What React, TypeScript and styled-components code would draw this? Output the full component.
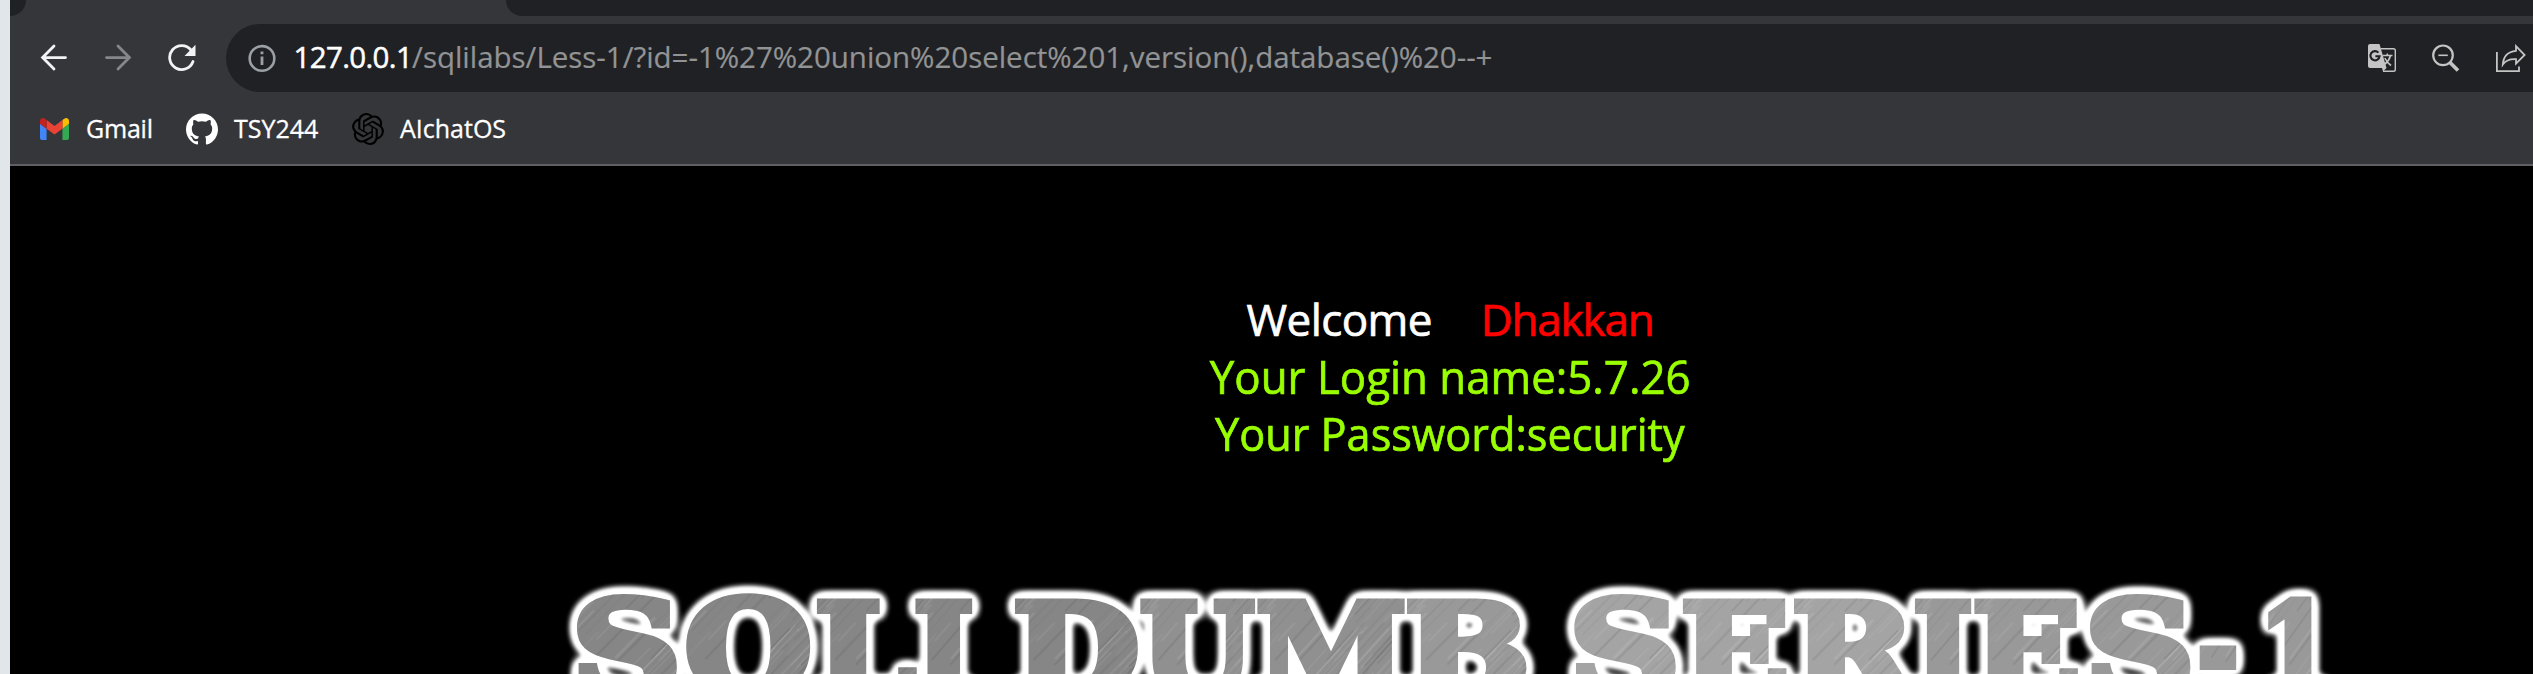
import React, { useLayoutEffect, useState } from 'react';
import styled, { createGlobalStyle } from 'styled-components';
import { SiGithub, SiOpenai } from 'react-icons/si';

const GlobalStyle = createGlobalStyle`
  * { box-sizing: border-box; }
  body { margin: 0; background: #000; overflow: hidden; }
`;

const Screen = styled.div`
  display: flex;
  width: 2533px;
  height: 674px;
  overflow: hidden;
  font-family: 'Open Sans', 'Noto Sans', sans-serif;
`;
const DesktopEdge = styled.div`
  flex: 0 0 10px;
  background: #e0e6ea;
`;
const Browser = styled.div`
  flex: 1;
  min-width: 0;
  display: flex;
  flex-direction: column;
  background: #35363a;
`;
const TabStrip = styled.div`
  display: flex;
  justify-content: space-between;
  height: 16px;
`;
const TabGap = styled.div<{ $side: 'left' | 'right' }>`
  width: ${p => (p.$side === 'left' ? '16px' : '2027px')};
  background: #202124;
  border-radius: ${p => (p.$side === 'left' ? '0 0 16px 0' : '0 0 0 16px')};
`;
const Toolbar = styled.div`
  display: flex;
  align-items: center;
  height: 68px;
  margin-top: 8px;
`;
const NavButton = styled.div<{ $dim?: boolean }>`
  width: 64px;
  height: 68px;
  display: flex;
  align-items: center;
  justify-content: center;
  color: ${p => (p.$dim ? '#86878a' : '#f1f3f4')};
  svg { display: block; }
`;
const NavGroup = styled.div`
  display: flex;
  padding-left: 12px;
  width: 216px;
`;
const AddressBar = styled.div`
  flex: 1;
  height: 68px;
  display: flex;
  align-items: center;
  justify-content: space-between;
  padding: 0 7px 0 22px;
  background: #202124;
  border-radius: 34px 0 0 34px;
`;
const UrlGroup = styled.div`
  display: flex;
  align-items: center;
  gap: 17.5px;
`;
const Url = styled.div`
  font-size: 29.5px;
  line-height: 66px;
  height: 68px;
  white-space: nowrap;
`;
const UrlPart = styled.span<{ $host?: boolean; $spacing: number }>`
  color: ${p => (p.$host ? '#fff' : '#929394')};
  letter-spacing: ${p => p.$spacing}px;
  -webkit-text-stroke: ${p => (p.$host ? 0.5 : 0.2)}px currentColor;
`;
const Actions = styled.div`
  display: flex;
  align-items: center;
  gap: 36px;
  color: #c4c4c4;
  svg { display: block; }
`;
const Bookmarks = styled.div`
  display: flex;
  align-items: center;
  height: 74px;
  margin-bottom: -2px;
  padding-left: 28px;
`;
const Bookmark = styled.div<{ $width: number }>`
  display: flex;
  align-items: center;
  height: 74px;
  width: ${p => p.$width}px;
  svg { display: block; }
`;
const BookmarkIcon = styled.div`
  width: 32px;
  margin: 0 16px 0 0;
  display: flex;
  justify-content: center;
`;
const BookmarkLabel = styled.span<{ $spacing: number }>`
  color: #fff;
  font-size: 25px;
  padding-bottom: 2px;
  letter-spacing: ${p => p.$spacing}px;
  -webkit-text-stroke: 0.3px currentColor;
`;
const Page = styled.div`
  flex: 1;
  min-height: 0;
  border-top: 2px solid #5f6064;
  background: #000;
  display: flex;
  flex-direction: column;
`;
const Greeting = styled.div`
  display: flex;
  flex-direction: column;
  align-items: center;
  width: 2880px;
  padding-top: 125px;
  align-self: flex-start;
`;
const WelcomeLine = styled.div`
  display: flex;
  gap: 49px;
  height: 57px;
  line-height: 57px;
  font-size: 44px;
`;
const Word = styled.span<{ $color: string; $spacing: number }>`
  color: ${p => p.$color};
  letter-spacing: ${p => p.$spacing}px;
  -webkit-text-stroke: 0.7px currentColor;
`;
const ResultLine = styled.div<{ $stretch: number }>`
  height: 57px;
  line-height: 57px;
  font-size: 46px;
  color: #99ff00;
  transform: scaleX(${p => p.$stretch});
  -webkit-text-stroke: 0.7px currentColor;
  white-space: nowrap;
`;
const Banner = styled.svg`
  display: block;
  flex: 0 0 134px;
  margin-top: 78px;
`;
const BANNER_FONT = "bold 126px 'DejaVu Serif', serif";
const WEIGHT = 8;
const BannerLetter = styled.text`
  font: ${BANNER_FONT};
  stroke-width: ${WEIGHT}px;
`;

/* Each letter of the banner: left and right edge of its ink, and its metal tone. */
const letters: [string, number, number, number][] = [
  ['S', 576.5, 677.5, 0], ['Q', 686, 811, 0], ['L', 816, 917, 0], ['I', 914.5, 973, 0],
  ['D', 1014, 1138, 0], ['U', 1140, 1256, 1], ['M', 1257, 1405, 1], ['B', 1406, 1527, 2],
  ['S', 1574, 1676.5, 3], ['E', 1682, 1787, 3], ['R', 1793, 1921, 3], ['I', 1914, 1972, 2],
  ['E', 1973.5, 2078.5, 2], ['S', 2089.5, 2191, 2], ['-', 2199, 2236.5, 2], ['1', 2268, 2327, 2],
];
const tones = ['#868686', '#909090', '#999', '#a4a4a4'];

const random = (seed: number) => {
  let s = seed;
  return () => {
    s = (s * 16807) % 2147483647;
    return s / 2147483647;
  };
};
const streaks = (() => {
  const r = random(77);
  return Array.from({ length: 620 }, () => ({
    x: r() * 400, y: r() * 400, len: 20 + r() * 90, w: 0.6 + r() * 1.6,
    light: r() > 0.5, o: 0.03 + r() * 0.1,
  }));
})();

const BannerText = () => {
  const [boxes, setBoxes] = useState<{ l: number; w: number }[]>([]);
  useLayoutEffect(() => {
    const ctx = document.createElement('canvas').getContext('2d')!;
    ctx.font = BANNER_FONT;
    setBoxes(letters.map(([c]) => {
      const m = ctx.measureText(c);
      return { l: -m.actualBoundingBoxLeft, w: m.actualBoundingBoxRight + m.actualBoundingBoxLeft };
    }));
  }, []);
  return (
    <Banner width="2523" height="134" viewBox="10 540 2523 134">
      <defs>
        {tones.map((tone, t) => (
          <pattern key={tone} id={`metal${t}`} patternUnits="userSpaceOnUse" width="400" height="400" patternTransform="rotate(-50)">
            <rect width="400" height="400" fill={tone} />
            {streaks.map((s, i) => (
              <rect key={i} x={s.x} y={s.y} width={s.len} height={s.w} fill={s.light ? '#fff' : '#222'} opacity={s.o} />
            ))}
          </pattern>
        ))}
        <filter id="halo" filterUnits="userSpaceOnUse" x="540" y="560" width="1820" height="180" colorInterpolationFilters="sRGB">
          <feGaussianBlur in="SourceAlpha" stdDeviation="5.8" />
          <feComponentTransfer result="glow">
            <feFuncR type="linear" slope="0" intercept="1" />
            <feFuncG type="linear" slope="0" intercept="1" />
            <feFuncB type="linear" slope="0" intercept="1" />
            <feFuncA type="linear" slope="8" intercept="-0.1" />
          </feComponentTransfer>
          <feGaussianBlur in="glow" stdDeviation="1.3" result="softGlow" />
          <feMerge>
            <feMergeNode in="softGlow" />
            <feMergeNode in="SourceGraphic" />
          </feMerge>
        </filter>
      </defs>
      <g filter="url(#halo)">
        {boxes.length > 0 && letters.map(([c, x0, x1, t], i) => {
          const b = boxes[i];
          const sx = (x1 - x0) / (b.w + WEIGHT);
          const tx = x0 + (WEIGHT / 2 - b.l) * sx;
          const metal = `url(#metal${t})`;
          const round = c === 'S' || c === 'Q';
          return (
            <BannerLetter key={i} transform={`translate(${tx} ${c === '-' ? 691 : 693.5}) scale(${sx} ${round ? 1.03 : 1})`}
              fill={metal} stroke={metal}>{c}</BannerLetter>
          );
        })}
      </g>
    </Banner>
  );
};

const Back = ({ flip }: { flip?: boolean }) => (
  <svg width="28" height="28" viewBox="0 0 28 28" fill="none" stroke="currentColor" strokeWidth="2.8"
    strokeLinecap="round" strokeLinejoin="miter" transform={flip ? 'scale(-1 1)' : undefined}>
    <path d="M25.5 13.6H3M14 2.1L2.6 13.6L14 25.1" />
  </svg>
);
const Reload = () => (
  <svg width="28" height="28" viewBox="0 0 28 28" fill="none">
    <path d="M25 17.5A12 12 0 1 1 23 6" stroke="currentColor" strokeWidth="2.8" strokeLinecap="round" />
    <path d="M27.5 0.8V12H16.5Z" fill="currentColor" />
  </svg>
);
const Info = () => (
  <svg width="28" height="28" viewBox="0 0 28 28" fill="none" stroke="#9aa0a6">
    <circle cx="14" cy="14.4" r="12.3" strokeWidth="2.6" />
    <path d="M14 12.6V21M14 7.6V10.3" strokeWidth="2.8" />
  </svg>
);
const Gmail = () => (
  <svg width="29" height="22" viewBox="52 42 88 66">
    <path fill="#4285f4" d="M58 108h14V74L52 59v43c0 3.32 2.69 6 6 6" />
    <path fill="#34a853" d="M120 108h14c3.32 0 6-2.69 6-6V59l-20 15" />
    <path fill="#fbbc04" d="M120 48v26l20-15v-8c0-7.42-8.47-11.65-14.4-7.2" />
    <path fill="#ea4335" d="M72 74V48l24 18 24-18v26L96 92" />
    <path fill="#c5221f" d="M52 51v8l20 15V48l-5.6-4.2c-5.94-4.45-14.4-.22-14.4 7.2" />
  </svg>
);
const Translate = () => (
  <svg width="28" height="28" viewBox="0 0 28 28" fill="none">
    <path d="M12.5 4.7H25.5Q27.3 4.7 27.3 6.5V25.5Q27.3 27.3 25.5 27.3H15" stroke="currentColor" strokeWidth="1.4" />
    <path d="M2 0H11.5L18.5 24L15 27.5L14 24H2Q0 24 0 22V2Q0 0 2 0Z" fill="currentColor" />
    <path d="M10.4 8.6A4.6 4.6 0 1 0 11.6 12.2H7.4" stroke="#202124" strokeWidth="2.1" />
    <path d="M15 11.5H24.5M19.3 9.5V11.5M22.5 11.8Q21 17 16.5 20.5M16.8 14Q19 18.5 23 21.5" stroke="currentColor" strokeWidth="1.6" />
  </svg>
);
const ZoomOut = () => (
  <svg width="28" height="28" viewBox="0 0 28 28" fill="none" stroke="currentColor">
    <circle cx="11" cy="11.3" r="9.8" strokeWidth="2.2" />
    <path d="M6.4 11.3H15.8" strokeWidth="1.6" />
    <path d="M18 18.5L26 26.5" strokeWidth="3.8" />
  </svg>
);
const Share = () => (
  <svg width="30" height="28" viewBox="0 0 30 28" fill="none" stroke="currentColor" strokeWidth="1.8">
    <path d="M0.9 8V27.1H23V22.5" />
    <path d="M20 2.2L28.6 11L20 19.6V15.2Q11 14.6 6.8 20.6Q7.6 8 20 6.8Z" />
  </svg>
);

export default function App() {
  return (
    <>
      <GlobalStyle />
      <Screen>
        <DesktopEdge />
        <Browser>
          <TabStrip>
            <TabGap $side="left" />
            <TabGap $side="right" />
          </TabStrip>
          <Toolbar>
            <NavGroup>
              <NavButton><Back /></NavButton>
              <NavButton $dim><Back flip /></NavButton>
              <NavButton><Reload /></NavButton>
            </NavGroup>
            <AddressBar>
              <UrlGroup>
                <Info />
                <Url>
                  <UrlPart $host $spacing={-0.65}>127.0.0.1</UrlPart>
                  <UrlPart $spacing={-0.03}>/sqlilabs/Less-1/?id=-1%27%20union%20select%201,version(),database()%20--+</UrlPart>
                </Url>
              </UrlGroup>
              <Actions>
                <Translate />
                <ZoomOut />
                <Share />
              </Actions>
            </AddressBar>
          </Toolbar>
          <Bookmarks>
            <Bookmark $width={148}>
              <BookmarkIcon><Gmail /></BookmarkIcon>
              <BookmarkLabel $spacing={-0.2}>Gmail</BookmarkLabel>
            </Bookmark>
            <Bookmark $width={166}>
              <BookmarkIcon><SiGithub size={32} color="#fff" /></BookmarkIcon>
              <BookmarkLabel $spacing={0}>TSY244</BookmarkLabel>
            </Bookmark>
            <Bookmark $width={170}>
              <BookmarkIcon><SiOpenai size={32} color="#000" /></BookmarkIcon>
              <BookmarkLabel $spacing={0}>AIchatOS</BookmarkLabel>
            </Bookmark>
          </Bookmarks>
          <Page>
            <Greeting>
              <WelcomeLine>
                <Word $color="#fff" $spacing={-0.6}>Welcome</Word>
                <Word $color="#f00" $spacing={-1.2}>Dhakkan</Word>
              </WelcomeLine>
              <ResultLine $stretch={0.953}>Your Login name:5.7.26</ResultLine>
              <ResultLine $stretch={0.94}>Your Password:security</ResultLine>
            </Greeting>
            <BannerText />
          </Page>
        </Browser>
      </Screen>
    </>
  );
}
